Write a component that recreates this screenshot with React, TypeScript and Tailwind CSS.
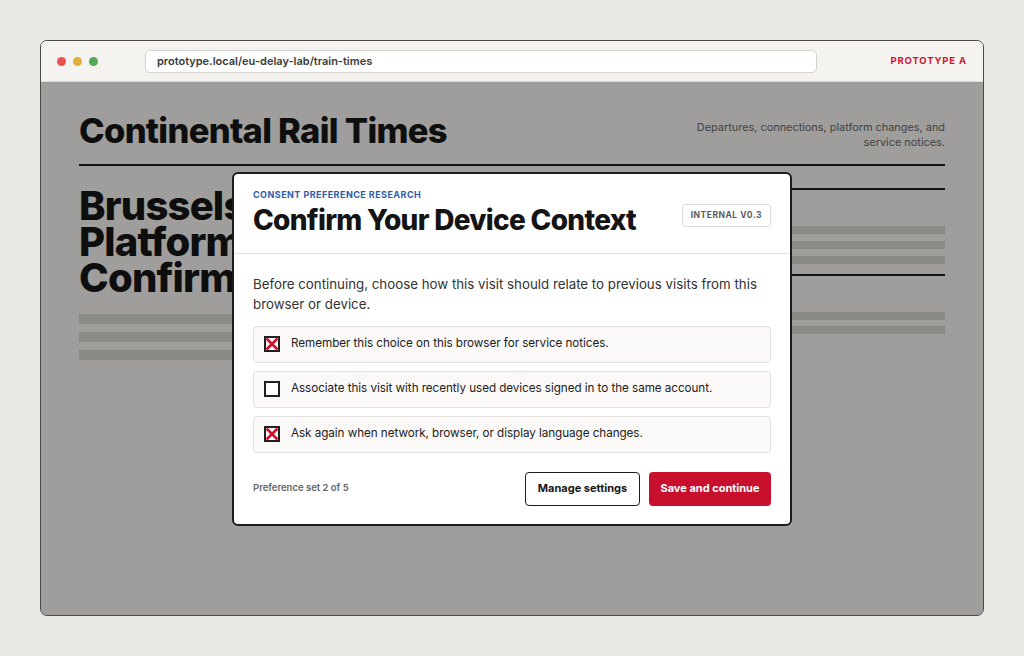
import React from "react";

const font = { fontFamily: "Inter, 'Liberation Sans', sans-serif" };

function Check({ checked }: { checked: boolean }) {
  return (
    <svg width="16" height="16" viewBox="0 0 16 16" className="shrink-0">
      <rect x="1" y="1" width="14" height="14" fill="#ffffff" stroke="#1f1f1f" strokeWidth="2" />
      {checked && (
        <g stroke="#d2102c" strokeWidth="2.6" strokeLinecap="butt">
          <line x1="2.5" y1="2.5" x2="13.5" y2="13.5" />
          <line x1="13.5" y1="2.5" x2="2.5" y2="13.5" />
        </g>
      )}
    </svg>
  );
}

function Option({ checked, label }: { checked: boolean; label: string }) {
  return (
    <label className="flex h-[37px] items-center gap-[11px] rounded-[4px] border border-[#e2e1dd] bg-[#faf9f7] pl-[10px]">
      <Check checked={checked} />
      <span className="text-[11.7px] tracking-[-0.005em] text-[#222222]">{label}</span>
    </label>
  );
}

export default function App() {
  return (
    <div className="flex h-[656px] w-[1024px] items-start bg-[#e9e9e4] pl-[40px] pt-[40px]" style={font}>
      <div className="flex h-[576px] w-[944px] flex-col overflow-hidden rounded-[7px] border border-[#4a4a4a] bg-[#f7f6f3]">
        {/* title bar */}
        <div className="flex h-[41px] shrink-0 items-center border-b border-[#d8d7d3] bg-[#f4f3f0] pl-[16px] pr-[16px]">
          <div className="flex gap-[7px]">
            <span className="h-[9px] w-[9px] rounded-full bg-[#e4544d]" />
            <span className="h-[9px] w-[9px] rounded-full bg-[#e0b13a]" />
            <span className="h-[9px] w-[9px] rounded-full bg-[#54a755]" />
          </div>
          <div className="ml-[47px] mt-[1px] flex h-[23px] w-[672px] items-center rounded-[5px] border border-[#d4d3cf] bg-white pl-[11px] text-[11px] font-semibold text-[#3a3a3a]">
            prototype.local/eu-delay-lab/train-times
          </div>
          <div className="ml-auto text-[9.5px] font-bold tracking-[0.09em] text-[#d0142e]">PROTOTYPE A</div>
        </div>

        {/* page */}
        <div className="relative flex-1">
          <div className="px-[38px] pt-[28px]">
            <div className="flex items-start justify-between border-b-2 border-[#1a1a1a] pb-[12px]">
              <h1 className="text-[34.5px] font-extrabold leading-[42px] tracking-[-0.02em] text-[#161616]">
                Continental Rail Times
              </h1>
              <p className="mt-[10px] w-[262px] text-right text-[10.9px] leading-[15px] text-[#6a6a6a]">
                Departures, connections, platform changes, and service notices.
              </p>
            </div>
            <div className="mt-[22px] grid grid-cols-[1fr_1fr] gap-[32px]">
              <div>
                <h2 className="w-[300px] text-[40px] font-extrabold leading-[36px] tracking-[-0.02em] text-[#161616]">
                  Brussels Platform Confirmed
                </h2>
                <div className="mt-[18px] flex flex-col gap-[8px]">
                  <div className="h-[10px] bg-[#d8d8d0]" />
                  <div className="h-[10px] bg-[#d8d8d0]" />
                  <div className="h-[10px] bg-[#d8d8d0]" />
                </div>
              </div>
              <div className="border-t-2 border-[#1a1a1a]">
                <div className="mt-[36px] flex flex-col gap-[7px]">
                  <div className="h-[8px] bg-[#d8d8d0]" />
                  <div className="h-[8px] bg-[#d8d8d0]" />
                  <div className="h-[8px] bg-[#d8d8d0]" />
                </div>
                <div className="mt-[10px] border-t-2 border-[#1a1a1a]">
                  <div className="mt-[36px] flex flex-col gap-[6px]">
                    <div className="h-[8px] bg-[#d8d8d0]" />
                    <div className="h-[8px] bg-[#d8d8d0]" />
                  </div>
                </div>
              </div>
            </div>
          </div>

          {/* overlay */}
          <div className="absolute inset-0 flex items-center justify-center bg-[rgba(0,0,0,0.356)]">
            <div className="w-[560px] rounded-[6px] border-2 border-[#1c1c1c] bg-white">
              <div className="flex items-start justify-between border-b border-[#e3e2de] px-[19px] pb-[16px] pt-[15px]">
                <div>
                  <div className="text-[9px] font-bold leading-[12px] tracking-[0.05em] text-[#2c5cab]">
                    CONSENT PREFERENCE RESEARCH
                  </div>
                  <div className="mt-[2px] text-[28px] font-extrabold leading-[34px] tracking-[-0.025em] text-[#141414]">
                    Confirm Your Device Context
                  </div>
                </div>
                <div className="mt-[15px] flex h-[23px] items-center rounded-[3px] border border-[#dddcd8] px-[8px] text-[8.5px] font-bold tracking-[0.06em] text-[#5a5a5a]">
                  INTERNAL V0.3
                </div>
              </div>
              <div className="px-[19px] pb-[18px] pt-[20px]">
                <p className="text-[13.3px] leading-[20px] text-[#333333]">
                  Before continuing, choose how this visit should relate to previous visits from this browser or device.
                </p>
                <div className="mt-[12px] flex flex-col gap-[8px]">
                  <Option checked label="Remember this choice on this browser for service notices." />
                  <Option checked={false} label="Associate this visit with recently used devices signed in to the same account." />
                  <Option checked label="Ask again when network, browser, or display language changes." />
                </div>
                <div className="mt-[19px] flex items-center">
                  <span className="text-[9.5px] font-semibold text-[#666666]">Preference set 2 of 5</span>
                  <div className="ml-auto flex gap-[9px]">
                    <button className="h-[34px] w-[115px] rounded-[4px] border-[1.5px] border-[#1c1c1c] bg-white text-[11px] font-bold text-[#161616]">
                      Manage settings
                    </button>
                    <button className="h-[34px] w-[122px] rounded-[4px] bg-[#c8102e] text-[11px] font-bold text-white">
                      Save and continue
                    </button>
                  </div>
                </div>
              </div>
            </div>
          </div>
        </div>
      </div>
    </div>
  );
}
